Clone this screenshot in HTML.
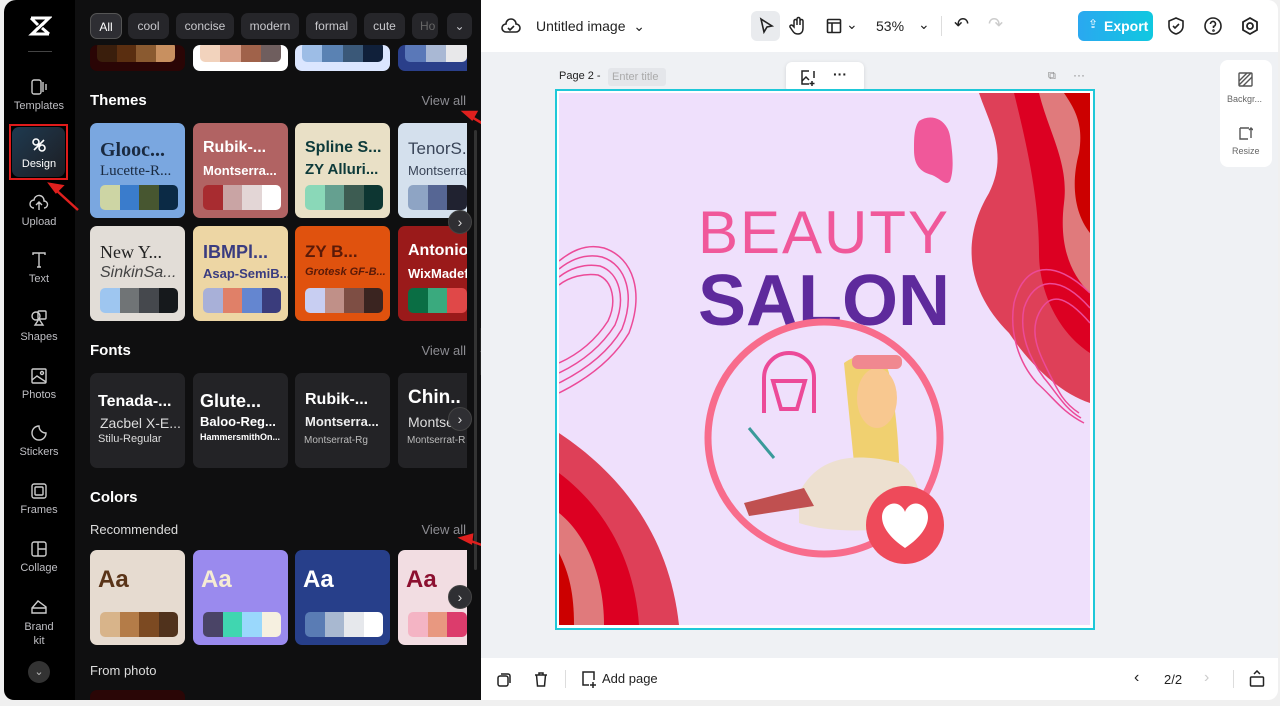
<!DOCTYPE html>
<html><head><meta charset="utf-8">
<style>
*{box-sizing:border-box;margin:0;padding:0}
body{width:1280px;height:706px;background:#f0f0f0;font-family:"Liberation Sans",Arial,sans-serif;position:relative;overflow:hidden}
.a{position:absolute}
#side{left:4px;top:0;width:72px;height:700px;background:#000;border-radius:12px 0 0 10px}
#panel{left:75px;top:0;width:406px;height:700px;background:#0f0f10}
.nav{position:absolute;left:0;width:70px;text-align:center;color:#bfbfc4;font-size:11px}
.nav svg{display:block;margin:0 auto 4px}
.chip{position:absolute;top:13px;height:26px;border-radius:7px;background:#26262a;color:#c8c8cc;font-size:12px;line-height:26px;text-align:center}
.card{position:absolute;width:95px;height:95px;border-radius:7px;overflow:hidden}
.pal{position:absolute;left:10px;right:7px;height:25px;border-radius:5px;overflow:hidden;display:flex}
.pal i{flex:1}
.t1,.t2{position:absolute;left:10px;white-space:nowrap;font-weight:bold}
.t1{top:16px;font-size:18px}.t2{top:40px;font-size:13px}
.h{position:absolute;left:90px;color:#fff;font-weight:bold;font-size:15px}
.va{position:absolute;right:14px;color:#8c8c92;font-size:13px}
.arr{position:absolute;width:24px;height:24px;border-radius:12px;background:#2f2f33;color:#ddd;font-size:14px;text-align:center;line-height:22px;border:1px solid #444}
.fc{position:absolute;top:373px;width:95px;height:95px;border-radius:7px;background:#232326;color:#fff;padding-left:8px;overflow:hidden;white-space:nowrap}
.cc .aa{position:absolute;left:8px;top:16px;font-size:24px;font-weight:bold}
.tb{color:#222;font-size:14px}
</style></head><body>
<div id="side" class="a">
 <svg class="a" style="left:24px;top:15px" width="24" height="22" viewBox="0 0 24 22"><path d="M3 3h18L4 19h17M3 3l7 7M21 3l-7 7M4 19l6-6M21 19l-7-6" stroke="#fff" stroke-width="3" fill="none"/></svg>
 <div class="a" style="left:24px;top:51px;width:24px;height:1px;background:#444"></div>
 <div class="nav" style="top:78px"><svg width="18" height="18" viewBox="0 0 18 18" fill="none" stroke="#ccc" stroke-width="1.4"><rect x="2" y="2" width="9" height="14" rx="2"/><path d="M13 4v10M16 6v6"/></svg>Templates</div>
 <div class="a" style="left:5px;top:124px;width:59px;height:56px;border:2px solid #e01b1b"></div>
 <div class="a" style="left:8px;top:127px;width:53px;height:50px;border-radius:7px;background:linear-gradient(135deg,#1e3a50,#1d1d22)"></div>
 <div class="nav" style="top:136px;color:#fff"><svg width="18" height="18" viewBox="0 0 18 18" fill="none" stroke="#fff" stroke-width="1.6"><circle cx="6" cy="6" r="3"/><circle cx="12" cy="12" r="3"/><path d="M4 14l10-10"/></svg>Design</div>
 <div class="nav" style="top:194px"><svg width="20" height="18" viewBox="0 0 20 18" fill="none" stroke="#ccc" stroke-width="1.4"><path d="M5 14a4 4 0 0 1 0-8 5 5 0 0 1 10 1 3.5 3.5 0 0 1 0 7M10 8v8M7 11l3-3 3 3"/></svg>Upload</div>
 <div class="nav" style="top:251px"><svg width="18" height="18" viewBox="0 0 18 18" fill="none" stroke="#ccc" stroke-width="1.4"><path d="M3 4V2h12v2M9 2v14M7 16h4"/></svg>Text</div>
 <div class="nav" style="top:309px"><svg width="18" height="18" viewBox="0 0 18 18" fill="none" stroke="#ccc" stroke-width="1.4"><circle cx="6" cy="7" r="4"/><rect x="8" y="2" width="8" height="8" rx="1"/><path d="M9 10l-4 6h8z"/></svg>Shapes</div>
 <div class="nav" style="top:367px"><svg width="18" height="18" viewBox="0 0 18 18" fill="none" stroke="#ccc" stroke-width="1.4"><rect x="2" y="2" width="14" height="14" rx="1"/><path d="M2 13l5-4 9 6"/><circle cx="12" cy="6" r="1.5"/></svg>Photos</div>
 <div class="nav" style="top:424px"><svg width="18" height="18" viewBox="0 0 18 18" fill="none" stroke="#ccc" stroke-width="1.4"><path d="M16 9A7 7 0 1 1 9 2c0 4 3 7 7 7z"/></svg>Stickers</div>
 <div class="nav" style="top:482px"><svg width="18" height="18" viewBox="0 0 18 18" fill="none" stroke="#ccc" stroke-width="1.4"><rect x="2" y="2" width="14" height="14" rx="2"/><rect x="5" y="5" width="8" height="8" rx="1"/></svg>Frames</div>
 <div class="nav" style="top:540px"><svg width="18" height="18" viewBox="0 0 18 18" fill="none" stroke="#ccc" stroke-width="1.4"><rect x="2" y="2" width="14" height="14" rx="2"/><path d="M8 2v14M8 9h8"/></svg>Collage</div>
 <div class="nav" style="top:598px;line-height:14px"><svg width="18" height="18" viewBox="0 0 18 18" fill="none" stroke="#ccc" stroke-width="1.4"><path d="M2 10l6-7 8 6v6H2zM2 10h14"/></svg>Brand<br>kit</div>
 <div class="a" style="left:24px;top:661px;width:22px;height:22px;border-radius:11px;background:#333;color:#bbb;font-size:11px;text-align:center;line-height:22px">⌄</div>
</div>
<div id="panel" class="a"></div>
<div class="chip" style="left:90px;width:32px;background:#2e2e33;color:#fff;border:1px solid #555">All</div>
<div class="chip" style="left:128px;width:41px">cool</div>
<div class="chip" style="left:176px;width:58px">concise</div>
<div class="chip" style="left:241px;width:58px">modern</div>
<div class="chip" style="left:306px;width:51px">formal</div>
<div class="chip" style="left:364px;width:41px">cute</div>
<div class="chip" style="left:412px;width:26px;color:#666;text-align:left;padding-left:8px">Ho</div>
<div class="chip" style="left:447px;width:25px">⌄</div>
<div class="card" style="left:90px;top:45px;height:26px;background:#2a0505"><div class="pal" style="top:-3px;left:7px;right:10px;height:20px"><i style="background:#3a1e0c"></i><i style="background:#5a2e10"></i><i style="background:#8a5a30"></i><i style="background:#c89060"></i></div></div>
<div class="card" style="left:193px;top:45px;height:26px;background:#fff"><div class="pal" style="top:-3px;left:7px;height:20px"><i style="background:#f2d3bd"></i><i style="background:#d9a089"></i><i style="background:#a0624a"></i><i style="background:#6f5e5e"></i></div></div>
<div class="card" style="left:295px;top:45px;height:26px;background:#dbe6ff"><div class="pal" style="top:-3px;left:7px;height:20px"><i style="background:#9dbde6"></i><i style="background:#5a82b3"></i><i style="background:#3a5878"></i><i style="background:#10203a"></i></div></div>
<div class="card" style="left:398px;top:45px;height:26px;width:69px;background:#2a3f8a;border-radius:7px 0 0 7px"><div class="pal" style="top:-3px;left:7px;right:0;height:20px"><i style="background:#5a78b8"></i><i style="background:#a9b8d4"></i><i style="background:#e8e8ea"></i></div></div>

<div class="h" style="top:92px">Themes</div><div class="va" style="top:93px;right:814px">View all</div>
<div class="card" style="left:90px;top:123px;background:#7aa7e0"><div class="t1" style="color:#1a2a40;font-family:'Liberation Serif',serif;font-size:20px">Glooc...</div><div class="t2" style="color:#1a2a40;font-family:'Liberation Serif',serif;font-weight:normal;font-size:15px">Lucette-R...</div><div class="pal" style="top:62px"><i style="background:#cdd5a4"></i><i style="background:#3a7ccc"></i><i style="background:#475630"></i><i style="background:#0b2a45"></i></div></div>
<div class="card" style="left:193px;top:123px;background:#b16363"><div class="t1" style="color:#fff;font-size:16px">Rubik-...</div><div class="t2" style="color:#fff">Montserra...</div><div class="pal" style="top:62px"><i style="background:#a82c30"></i><i style="background:#c9a4a4"></i><i style="background:#e3d6d6"></i><i style="background:#fff"></i></div></div>
<div class="card" style="left:295px;top:123px;background:#e9e0c6"><div class="t1" style="color:#0d3a3a;font-size:16px">Spline S...</div><div class="t2" style="color:#0d3a3a;top:38px;font-size:15px">ZY Alluri...</div><div class="pal" style="top:62px"><i style="background:#8ad8b8"></i><i style="background:#65a090"></i><i style="background:#3d5c52"></i><i style="background:#0d3632"></i></div></div>
<div class="card" style="left:398px;top:123px;width:69px;background:#d4e0ed;border-radius:7px 0 0 7px"><div class="t1" style="color:#3a4558;font-weight:normal;font-size:17px">TenorS.</div><div class="t2" style="color:#3a4558;font-weight:normal">Montserra</div><div class="pal" style="top:62px;right:0"><i style="background:#8ea4c4"></i><i style="background:#566694"></i><i style="background:#202230"></i></div></div>
<div class="card" style="left:90px;top:226px;background:#e2ddd7"><div class="t1" style="color:#222;font-family:'Liberation Serif',serif;font-weight:normal">New Y...</div><div class="t2" style="color:#444;font-style:italic;font-weight:normal;font-size:16px;top:38px">SinkinSa...</div><div class="pal" style="top:62px"><i style="background:#9ec6f0"></i><i style="background:#707476"></i><i style="background:#45484d"></i><i style="background:#16191c"></i></div></div>
<div class="card" style="left:193px;top:226px;background:#edd6a4"><div class="t1" style="color:#3a3c80">IBMPl...</div><div class="t2" style="color:#3a3c80">Asap-SemiB...</div><div class="pal" style="top:62px"><i style="background:#a8b0d8"></i><i style="background:#e08068"></i><i style="background:#6486d0"></i><i style="background:#3a3c7c"></i></div></div>
<div class="card" style="left:295px;top:226px;background:#e0520e"><div class="t1" style="color:#5a1a08;font-size:17px">ZY B...</div><div class="t2" style="color:#5a1a08;font-style:italic;font-size:11px">Grotesk GF-B...</div><div class="pal" style="top:62px"><i style="background:#c8cef2"></i><i style="background:#c09088"></i><i style="background:#7e4e44"></i><i style="background:#3a2420"></i></div></div>
<div class="card" style="left:398px;top:226px;width:69px;background:#9a1a1a;border-radius:7px 0 0 7px"><div class="t1" style="color:#fff;font-size:16px">Antonio-B</div><div class="t2" style="color:#fff">WixMadef</div><div class="pal" style="top:62px;right:0"><i style="background:#0a6e44"></i><i style="background:#3aaa7e"></i><i style="background:#e04848"></i></div></div>
<div class="arr" style="left:448px;top:210px">›</div>

<div class="h" style="top:342px">Fonts</div><div class="va" style="top:343px;right:814px">View all</div>
<div class="fc" style="left:90px"><div style="position:absolute;left:8px;top:20px;font-weight:bold;font-size:16px">Tenada-...</div><div style="position:absolute;left:10px;top:42px;font-size:14px;color:#ddd">Zacbel X-E...</div><div style="position:absolute;left:8px;top:60px;font-size:11px;color:#ddd">Stilu-Regular</div></div>
<div class="fc" style="left:193px"><div style="position:absolute;left:7px;top:18px;font-weight:bold;font-size:18px">Glute...</div><div style="position:absolute;left:7px;top:41px;font-weight:bold;font-size:13px">Baloo-Reg...</div><div style="position:absolute;left:7px;top:59px;font-size:9px;font-weight:bold">HammersmithOn...</div></div>
<div class="fc" style="left:295px"><div style="position:absolute;left:10px;top:18px;font-weight:bold;font-size:16px">Rubik-...</div><div style="position:absolute;left:10px;top:41px;font-size:13px;font-weight:bold;color:#eee">Montserra...</div><div style="position:absolute;left:9px;top:62px;font-size:10px;color:#bbb">Montserrat-Rg</div></div>
<div class="fc" style="left:398px;width:69px;border-radius:7px 0 0 7px"><div style="position:absolute;left:10px;top:14px;font-weight:bold;font-size:19px">Chin..</div><div style="position:absolute;left:10px;top:41px;font-size:14px;color:#ddd">Montse</div><div style="position:absolute;left:9px;top:62px;font-size:10px;color:#bbb">Montserrat-R</div></div>
<div class="arr" style="left:448px;top:407px">›</div>

<div class="h" style="top:489px">Colors</div>
<div class="a" style="left:90px;top:522px;color:#ddd;font-size:13px">Recommended</div><div class="va" style="top:522px;right:814px">View all</div>
<div class="card cc" style="left:90px;top:550px;background:#e6dbd0"><div class="aa" style="color:#5a3418">Aa</div><div class="pal" style="top:62px"><i style="background:#d8b48a"></i><i style="background:#b47c48"></i><i style="background:#7c4a22"></i><i style="background:#50321c"></i></div></div>
<div class="card cc" style="left:193px;top:550px;background:#9a8aee"><div class="aa" style="color:#f6ecd4">Aa</div><div class="pal" style="top:62px"><i style="background:#4a4466"></i><i style="background:#40d6b0"></i><i style="background:#9ad8fc"></i><i style="background:#f6f0e0"></i></div></div>
<div class="card cc" style="left:295px;top:550px;background:#273f8a"><div class="aa" style="color:#fff">Aa</div><div class="pal" style="top:62px"><i style="background:#5a7cb4"></i><i style="background:#a8b8d0"></i><i style="background:#e6e8ec"></i><i style="background:#fff"></i></div></div>
<div class="card cc" style="left:398px;top:550px;width:69px;background:#f2dde2;border-radius:7px 0 0 7px"><div class="aa" style="color:#8c1030">Aa</div><div class="pal" style="top:62px;right:0"><i style="background:#f4b4c4"></i><i style="background:#e89880"></i><i style="background:#dc3c6c"></i></div></div>
<div class="arr" style="left:448px;top:585px">›</div>
<div class="a" style="left:90px;top:663px;color:#ddd;font-size:13px">From photo</div>
<div class="a" style="left:90px;top:690px;width:95px;height:10px;background:#2a0606;border-radius:7px 7px 0 0"></div>
<div class="a" style="left:474px;top:130px;width:3px;height:440px;background:#333;border-radius:2px"></div>
<div class="a" style="left:480px;top:328px;width:8px;height:47px;background:#222;border-radius:0 6px 6px 0;color:#777;font-size:10px;line-height:47px">‹</div>

<svg class="a" style="left:0;top:0" width="500" height="560"><g stroke="#e0201e" stroke-width="2.5" fill="#e0201e"><path d="M78 210L56 190"/><path d="M50 184l12 2-6 6z"/><path d="M490 128L470 116"/><path d="M464 112l12 0-4 7z"/><path d="M490 548L468 540"/><path d="M461 538l11-3-1 8z"/></g></svg>

<div class="a" style="left:481px;top:0;width:797px;height:700px;background:#eff1f4;border-radius:0 10px 10px 0;overflow:hidden">
 <div class="a" style="left:0;top:0;width:797px;height:52px;background:#fff"></div>
 <div class="a" style="left:0;top:658px;width:797px;height:42px;background:#fff"></div>
</div>
<svg class="a" style="left:500px;top:16px" width="22" height="20" viewBox="0 0 22 20" fill="none" stroke="#222" stroke-width="1.6"><path d="M6 16a4 4 0 0 1 0-8 5 5 0 0 1 10 0 4 4 0 0 1 0 8z"/><path d="M8 12l2 2 4-4"/></svg>
<div class="a tb" style="left:536px;top:18px;font-size:14px">Untitled image &nbsp;⌄</div>
<div class="a" style="left:751px;top:11px;width:29px;height:30px;background:#e9ebee;border-radius:6px"></div>
<svg class="a" style="left:757px;top:17px" width="18" height="18" viewBox="0 0 18 18" fill="none" stroke="#222" stroke-width="1.6"><path d="M4 2l11 7-5 1-3 5z"/></svg>
<svg class="a" style="left:789px;top:16px" width="18" height="20" viewBox="0 0 18 20" fill="none" stroke="#222" stroke-width="1.5"><path d="M5 11V5a1.5 1.5 0 0 1 3 0v4V3a1.5 1.5 0 0 1 3 0v6V5a1.5 1.5 0 0 1 3 0v7c0 4-2 6-5 6s-4-1-6-4l-2-3a1.5 1.5 0 0 1 2.5-1.5z"/></svg>
<svg class="a" style="left:826px;top:18px" width="16" height="16" viewBox="0 0 16 16" fill="none" stroke="#222" stroke-width="1.6"><rect x="1.5" y="1.5" width="13" height="13" rx="1"/><path d="M1.5 5h13M6 5v9.5"/></svg>
<div class="a tb" style="left:846px;top:16px">⌄</div>
<div class="a tb" style="left:876px;top:18px">53%</div><div class="a tb" style="left:918px;top:16px">⌄</div>
<div class="a" style="left:941px;top:16px;width:1px;height:20px;background:#ddd"></div>
<div class="a" style="left:954px;top:14px;font-size:18px;color:#222">↶</div>
<div class="a" style="left:988px;top:14px;font-size:18px;color:#ccc">↷</div>
<div class="a" style="left:1078px;top:11px;width:75px;height:30px;border-radius:6px;background:linear-gradient(90deg,#2aa8f0,#10c8e0);color:#fff;font-size:14px;font-weight:bold;line-height:30px;padding-left:26px">Export</div>
<div class="a" style="left:1088px;top:17px;color:#fff;font-size:12px">⇪</div>
<svg class="a" style="left:1166px;top:16px" width="20" height="20" viewBox="0 0 20 20" fill="none" stroke="#222" stroke-width="1.6"><path d="M10 2l7 3v5c0 4-3 7-7 8-4-1-7-4-7-8V5z"/><path d="M7 10l2 2 4-4"/></svg>
<svg class="a" style="left:1203px;top:16px" width="20" height="20" viewBox="0 0 20 20" fill="none" stroke="#222" stroke-width="1.6"><circle cx="10" cy="10" r="8"/><path d="M7.5 8a2.5 2.5 0 1 1 3 2.4V12"/><circle cx="10.5" cy="14.5" r=".5"/></svg>
<svg class="a" style="left:1240px;top:16px" width="20" height="20" viewBox="0 0 20 20" fill="none" stroke="#222" stroke-width="1.8"><path d="M10 2l7 4v8l-7 4-7-4V6z"/><circle cx="10" cy="10" r="3"/></svg>

<div class="a" style="left:559px;top:70px;font-size:11px;color:#222">Page 2 -</div>
<div class="a" style="left:608px;top:68px;width:58px;height:18px;background:#e4e6ea;border-radius:3px;font-size:11px;color:#aaa;line-height:18px;padding-left:4px">Enter title</div>
<div class="a" style="left:786px;top:62px;width:78px;height:31px;background:#fff;border-radius:6px;box-shadow:0 1px 4px rgba(0,0,0,.12)"></div>
<svg class="a" style="left:799px;top:69px" width="18" height="18" viewBox="0 0 18 18" fill="none" stroke="#222" stroke-width="1.5"><path d="M10 2H3v13h7M15 2v7"/><path d="M3 12l4-4 3 3"/><path d="M13 12v5M10.5 14.5h5"/></svg>
<div class="a" style="left:833px;top:66px;font-size:14px;color:#222;font-weight:bold">···</div>
<div class="a" style="left:1048px;top:70px;font-size:11px;color:#888">⧉</div>
<div class="a" style="left:1073px;top:68px;font-size:12px;color:#888">···</div>
<div class="a" style="left:1220px;top:60px;width:52px;height:107px;background:#fff;border-radius:8px"></div>
<svg class="a" style="left:1238px;top:72px" width="15" height="15" viewBox="0 0 15 15" fill="none" stroke="#555" stroke-width="1.4"><rect x="1" y="1" width="13" height="13" rx="1"/><path d="M1 9l8-8M5 14l9-9M1 13L13 1"/></svg>
<div class="a" style="left:1227px;top:94px;font-size:9px;color:#666">Backgr...</div>
<svg class="a" style="left:1238px;top:125px" width="15" height="15" viewBox="0 0 15 15" fill="none" stroke="#555" stroke-width="1.4"><path d="M2 3v11h8M2 3h9M13 3v10M11 5l2-2 2 2"/></svg>
<div class="a" style="left:1232px;top:146px;font-size:9px;color:#666">Resize</div>

<div class="a" style="left:555px;top:89px;width:540px;height:541px;border:2px solid #1ec8d8;background:#fff"></div>
<svg class="a" style="left:559px;top:93px" width="531" height="532" viewBox="0 0 531 532">
 <rect width="531" height="532" fill="#efe0fc"/>
 <path d="M420 0H531V310C500 300 470 270 450 240 410 200 400 150 430 100 450 60 430 30 420 0z" fill="#de4058"/>
 <path d="M455 0H531V260C500 240 480 200 480 160 480 110 470 60 455 0z" fill="#dc0022"/>
 <path d="M480 0H531V200C510 180 500 150 505 110 510 70 490 40 480 0z" fill="#e07a7c"/>
 <path d="M505 0H531V140C515 120 512 90 520 60 525 30 515 15 505 0z" fill="#cc0000"/>
 <path d="M360 28c12-8 28-2 31 15 3 18 4 35 0 45-4 6-10-3-18-6-12-3-18-10-18-25 0-12 0-22 5-29z" fill="#f0589a"/>
 <path d="M0 340C60 380 110 440 120 532H0z" fill="#de4058"/>
 <path d="M0 380C40 410 75 460 80 532H0z" fill="#dc0022"/>
 <path d="M0 420C25 440 45 480 45 532H0z" fill="#e07a7c"/>
 <path d="M0 460C10 480 15 500 15 532H0z" fill="#cc0000"/>
 <g fill="none" stroke="#ec4a98" stroke-width="1.5">
  <path d="M0 300C30 285 55 265 70 240 85 200 75 165 45 155 25 150 10 160 0 168"/>
  <path d="M0 290C28 276 50 258 63 236 76 203 68 172 43 164 25 160 10 168 0 176"/>
  <path d="M0 280C25 268 44 251 56 232 67 206 61 180 41 173 25 170 10 176 0 184"/>
  <path d="M0 270C22 260 38 245 49 228 58 209 54 188 39 182 25 180 10 184 0 192"/>
  <path d="M531 230C505 200 490 200 480 220 470 240 480 260 490 280 500 300 505 310 520 320"/>
  <path d="M531 215C500 180 475 185 465 215 460 240 470 265 485 285 498 300 505 315 522 325"/>
  <path d="M531 200C495 165 465 170 455 210 450 240 460 270 478 290 495 305 502 318 525 330"/>
 </g>
 <text x="265" y="160" text-anchor="middle" font-family="Liberation Sans,sans-serif" font-size="60" fill="#f0589a" letter-spacing="2">BEAUTY</text>
 <text x="265" y="232" text-anchor="middle" font-family="Liberation Sans,sans-serif" font-size="72" font-weight="bold" fill="#5e2a9c">SALON</text>
 <circle cx="265" cy="345" r="116" fill="none" stroke="#f86c8c" stroke-width="7"/>
 <path d="M205 320v-35a25 25 0 0 1 50 0v35M214 288h32l-8 28h-16z" fill="none" stroke="#ec4a98" stroke-width="4"/>
 <path d="M285 270c15-12 40-10 45 10 8 40 12 90 10 140l-40 0z" fill="#f0d070"/>
 <path d="M240 400c20-40 60-40 100-30 20 10 25 40 20 60-40 10-90 10-120 0z" fill="#ede0d0"/>
 <ellipse cx="318" cy="305" rx="20" ry="30" fill="#f8c890"/>
 <rect x="293" y="262" width="50" height="14" rx="6" fill="#f08890"/>
 <path d="M185 410l60-15 10 18-65 10z" fill="#c05050"/>
 <path d="M190 335l25 30" stroke="#3a9a9a" stroke-width="3"/>
 <circle cx="346" cy="432" r="39" fill="#ee4a5a"/>
 <path d="M346 455c-30-20-26-40-14-44 6-2 12 2 14 8 2-6 8-10 14-8 12 4 16 24-14 44z" fill="#fff"/>
</svg>

<svg class="a" style="left:496px;top:672px" width="16" height="16" viewBox="0 0 16 16" fill="none" stroke="#222" stroke-width="1.5"><rect x="2" y="4" width="10" height="10" rx="2"/><path d="M5 2h7a2 2 0 0 1 2 2v7M7 9h0"/></svg>
<svg class="a" style="left:533px;top:671px" width="16" height="17" viewBox="0 0 16 17" fill="none" stroke="#222" stroke-width="1.5"><path d="M2 4h12M6 4V2h4v2M3.5 4l1 11h7l1-11"/></svg>
<div class="a" style="left:565px;top:670px;width:1px;height:18px;background:#ddd"></div>
<svg class="a" style="left:580px;top:670px" width="18" height="18" viewBox="0 0 18 18" fill="none" stroke="#222" stroke-width="1.5"><path d="M9 15H3V2h11v8M13 12v6M10 15h6"/></svg>
<div class="a tb" style="left:602px;top:671px;font-size:13px">Add page</div>
<div class="a tb" style="left:1134px;top:669px;font-size:16px">‹</div>
<div class="a tb" style="left:1164px;top:672px;font-size:13px">2/2</div>
<div class="a" style="left:1204px;top:669px;font-size:16px;color:#ccc">›</div>
<div class="a" style="left:1233px;top:670px;width:1px;height:18px;background:#ddd"></div>
<svg class="a" style="left:1249px;top:670px" width="16" height="18" viewBox="0 0 16 18" fill="none" stroke="#222" stroke-width="1.5"><rect x="1.5" y="7" width="13" height="9" rx="1"/><path d="M5 4l3-3 3 3"/></svg>
</body></html>
